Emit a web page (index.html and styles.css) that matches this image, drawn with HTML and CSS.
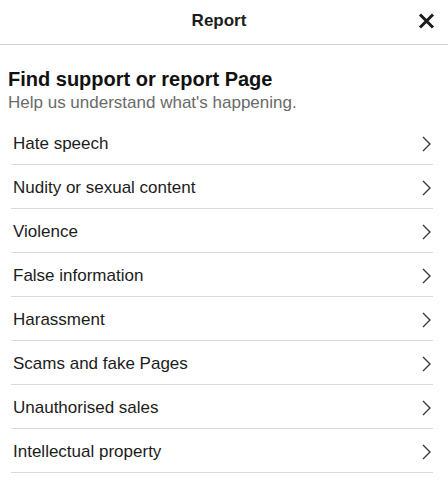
FILE: index.html
```html
<!DOCTYPE html>
<html lang="en">
<head>
<meta charset="utf-8">
<title>Report</title>
<link rel="stylesheet" href="styles.css">
</head>
<body>
<div class="dialog">
  <header class="dialog-header">
    <span class="spacer"></span>
    <h1 class="dialog-title">Report</h1>
    <button class="close-btn" aria-label="Close">
      <svg width="17" height="16" viewBox="0 0 17 16"><path d="M2 1.5 L15 14.5 M15 1.5 L2 14.5" stroke="#1c1c1c" stroke-width="3" fill="none" stroke-linecap="butt"/></svg>
    </button>
  </header>
  <section class="intro">
    <h2 class="intro-title">Find support or report Page</h2>
    <p class="intro-sub">Help us understand what's happening.</p>
  </section>
  <ul class="options">
    <li class="option"><span>Hate speech</span><svg class="chev" width="10" height="16" viewBox="0 0 10 16"><path d="M2 1 L9 8 L2 15" /></svg></li>
    <li class="option"><span>Nudity or sexual content</span><svg class="chev" width="10" height="16" viewBox="0 0 10 16"><path d="M2 1 L9 8 L2 15" /></svg></li>
    <li class="option"><span>Violence</span><svg class="chev" width="10" height="16" viewBox="0 0 10 16"><path d="M2 1 L9 8 L2 15" /></svg></li>
    <li class="option"><span>False information</span><svg class="chev" width="10" height="16" viewBox="0 0 10 16"><path d="M2 1 L9 8 L2 15" /></svg></li>
    <li class="option"><span>Harassment</span><svg class="chev" width="10" height="16" viewBox="0 0 10 16"><path d="M2 1 L9 8 L2 15" /></svg></li>
    <li class="option"><span>Scams and fake Pages</span><svg class="chev" width="10" height="16" viewBox="0 0 10 16"><path d="M2 1 L9 8 L2 15" /></svg></li>
    <li class="option"><span>Unauthorised sales</span><svg class="chev" width="10" height="16" viewBox="0 0 10 16"><path d="M2 1 L9 8 L2 15" /></svg></li>
    <li class="option"><span>Intellectual property</span><svg class="chev" width="10" height="16" viewBox="0 0 10 16"><path d="M2 1 L9 8 L2 15" /></svg></li>
  </ul>
</div>
</body>
</html>
```

FILE: styles.css
```css
* { box-sizing: border-box; }
html, body {
  margin: 0;
  padding: 0;
  background: #fff;
}
body {
  font-family: "Liberation Sans", Arial, sans-serif;
  color: #1c1c1c;
}
.dialog {
  width: 448px;
}
.dialog-header {
  height: 45px;
  border-bottom: 1px solid #cfcfcf;
  display: grid;
  grid-template-columns: 1fr auto 1fr;
  align-items: center;
}
.dialog-title {
  margin: 0 10px 0 0;
  font-size: 17px;
  font-weight: bold;
  line-height: 20px;
  color: #1c1c1c;
  padding-bottom: 3px;
}
.close-btn {
  justify-self: end;
  margin: 0 13px 2px 0;
  padding: 0;
  border: 0;
  background: none;
  width: 17px;
  height: 16px;
  display: block;
}
.close-btn svg { display: block; }
.intro {
  padding: 22px 8px 0 8px;
}
.intro-title {
  margin: 0;
  font-size: 20px;
  line-height: 24px;
  font-weight: bold;
  color: #111;
}
.intro-sub {
  margin: 2px 0 0 0;
  font-size: 17px;
  line-height: 20px;
  color: #6a6a6a;
}
.options {
  list-style: none;
  margin: 8px 15px 0 11px;
  padding: 0;
}
.option {
  height: 44px;
  border-bottom: 1px solid #dadada;
  display: flex;
  align-items: center;
  justify-content: space-between;
  padding: 2px 2px 0 2px;
  font-size: 17px;
  line-height: 20px;
  color: #1c1c1c;
}
.chev {
  display: block;
  fill: none;
  stroke: #3a3a3a;
  stroke-width: 1.4;
}
```
